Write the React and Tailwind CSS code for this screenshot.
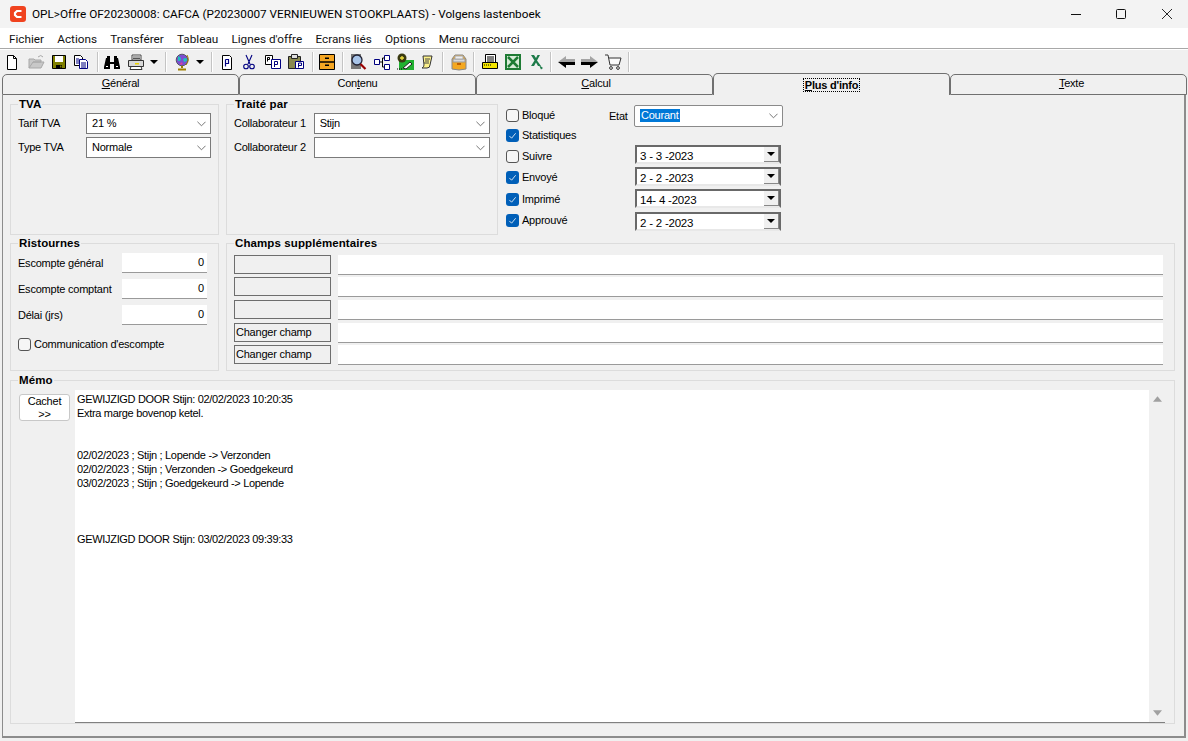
import React from "react";

const memoLines = [
  "GEWIJZIGD DOOR Stijn: 02/02/2023 10:20:35",
  "Extra marge bovenop ketel.",
  "",
  "",
  "02/02/2023 ; Stijn ; Lopende -> Verzonden",
  "02/02/2023 ; Stijn ; Verzonden -> Goedgekeurd",
  "03/02/2023 ; Stijn ; Goedgekeurd -> Lopende",
  "",
  "",
  "",
  "GEWIJZIGD DOOR Stijn: 03/02/2023 09:39:33",
];

const menus = ["Fichier", "Actions", "Transférer", "Tableau", "Lignes d'offre", "Ecrans liés", "Options", "Menu raccourci"];

function Icon({ className = "", children }) {
  return (
    <svg viewBox="0 0 18 18" className={`w-[18px] h-[18px] shrink-0 ${className}`}>
      {children}
    </svg>
  );
}

const Sep = ({ className = "" }) => <div className={`w-[2px] h-[20px] bg-[#c4c4c4] border-r border-white shrink-0 ${className}`} />;

const Drop = ({ className = "" }) => (
  <svg viewBox="0 0 12 18" className={`w-[12px] h-[18px] shrink-0 ${className}`}>
    <path d="M2 7h8l-4 4z" fill="#000" />
  </svg>
);

function Toolbar() {
  return (
    <div className="h-[23px] flex items-center bg-[#f0f0f0]">
      <Icon className="ml-[3px]"><path d="M4.500 2.500h6l3 3v11h-9z" fill="#fff" stroke="#000" /><path d="M10.500 2.500v3h3" fill="none" stroke="#000" /></Icon>
      <Icon className="ml-[7px]"><path d="M1 15V6h5l1 1h6v2H5l-4 6h12l3-6H5" fill="#c8c8c8" stroke="#a8a8a8" /><path d="M10 4q3-3 5 0" fill="none" stroke="#a8a8a8" /></Icon>
      <Icon className="ml-[4px]"><path d="M2.500 2.500h13v13h-13z" fill="#808000" stroke="#000" /><path d="M5 3h8v6H5z" fill="#fff" /><path d="M6 12h6v3.500H6z" fill="#000" /><path d="M10 12.500h1.500v2H10z" fill="#808000" /></Icon>
      <Icon className="ml-[4px]"><path d="M2.500 2.500h6l2 2v8h-8z" fill="#fff" stroke="#000" /><path d="M7.500 6.500h6l2 2v7h-8z" fill="#fff" stroke="#000080" /><path d="M4 6h3M4 8h3M4 10h3M9 10h5M9 12h5M9 14h5" stroke="#000080" /></Icon>
      <Sep className="ml-[7px]" />
      <Icon className="ml-[4px]"><path d="M3 5h4v4h4V5h4l2 9v2h-6V11H7v5H1v-2z" fill="#000" /><path d="M4 3h3v3H4zM11 3h3v3h-3z" fill="#000" /><path d="M3 13h2v1H3zM13 13h2v1h-2z" fill="#fff" /></Icon>
      <Icon className="ml-[6px]"><path d="M5 2h9v5H5z" fill="#fff" stroke="#444" /><path d="M1.500 7.500h15v6h-15z" fill="#d8d8d8" stroke="#333" /><path d="M4 13.500h10l1 3H3z" fill="#fff" stroke="#333" /><path d="M8 10h4v1.500H8z" fill="#e8d000" /><path d="M6 4h7M6 5.500h7" stroke="#555" /></Icon>
      <Drop className="ml-[3px]" />
      <Sep className="ml-[5px]" />
      <Icon className="ml-[6px]">
        <circle cx="9" cy="7" r="5.800" fill="#7b4fd0" stroke="#556" />
        <path d="M5 3q3 1 3 3t-3 2zM10 6q3-2 4 0t-3 3z" fill="#20c0c0" />
        <path d="M8 9l2 2-3 1z" fill="#e040a0" />
        <path d="M9 13v2M5 16.500h8" stroke="#a08000" strokeWidth="2" />
        <path d="M14 2q3 5-1 10" fill="none" stroke="#a08000" />
      </Icon>
      <Drop className="ml-[3px]" />
      <Sep className="ml-[5px]" />
      <Icon className="ml-[5px]"><path d="M4.500 2.500h7l2 2v12h-9z" fill="#fff" stroke="#000" /><path d="M7.500 6.500h3v4h-3M7.500 6.500v7" fill="none" stroke="#000080" strokeWidth="1.200" /></Icon>
      <Icon className="ml-[4px]"><path d="M6 2l4 9M12 2l-4 9" stroke="#000080" strokeWidth="1.100" /><circle cx="6" cy="13.500" r="2.300" fill="none" stroke="#000080" strokeWidth="1.100" /><circle cx="12" cy="13.500" r="2.300" fill="none" stroke="#000080" strokeWidth="1.100" /></Icon>
      <Icon className="ml-[6px]"><path d="M1.500 2.500h7v9h-7z" fill="#fff" stroke="#000" /><path d="M7.500 6.500h9v9h-9z" fill="#fff" stroke="#000080" /><path d="M10.500 8.500h3v3h-3M10.500 8.500v5.500" fill="none" stroke="#000080" /><path d="M3.500 4.500h2v2h-2M3.500 4.500v4" fill="none" stroke="#000" /></Icon>
      <Icon className="ml-[5px]"><path d="M1.500 3.500h12v12h-12z" fill="#8a8a50" stroke="#222" /><path d="M4.500 1.500h6v4h-6z" fill="#ddd" stroke="#222" /><path d="M8.500 8.500h8v7h-8z" fill="#fff" stroke="#000080" /><path d="M11.500 10h3v2.500h-3M11.500 10v4.500" fill="none" stroke="#000080" /></Icon>
      <Sep className="ml-[7px]" />
      <Icon className="ml-[4px]"><path d="M1.500 1.500h15v15h-15z" fill="#f5a623" stroke="#000" /><path d="M1.500 9h15" stroke="#000" strokeWidth="1.500" /><path d="M7 4.500h4v1.500H7zM7 11.500h4V13H7z" fill="#000" /></Icon>
      <Sep className="ml-[6px]" />
      <Icon className="ml-[5px]"><path d="M2 1h10v15H2z" fill="#777" /><circle cx="8" cy="7" r="5" fill="#a8c4e8" stroke="#223" strokeWidth="1.300" /><path d="M11.500 11l5 5" stroke="#900" strokeWidth="2.200" /></Icon>
      <Icon className="ml-[6px]"><path d="M1.500 6.500h5v5h-5zM11.500 2.500h5v5h-5zM11.500 11.500h5v5h-5z" fill="#fff" stroke="#000080" /><path d="M6.500 9h3V5h2M9.500 9v5h2" fill="none" stroke="#000" /></Icon>
      <Icon className="ml-[5px]"><path d="M3 7h15v10H3z" fill="#20b030" /><circle cx="6" cy="5" r="4.500" fill="#3a3a10" /><path d="M6 3v4M4 5h4" stroke="#f0e040" strokeWidth="1.300" /><path d="M7 15l7-6 2 2-6 5z" fill="#fff" stroke="#222" /><path d="M1 16h5" stroke="#000" strokeDasharray="1 1" /></Icon>
      <Icon className="ml-[4px]"><path d="M5 3h9l-2 9q0 3-3 3H4q2-1 2-3z" fill="#fdf28a" stroke="#333" /><path d="M7 6h5M7 8h4M6 10h5" stroke="#444" /></Icon>
      <Sep className="ml-[6px]" />
      <Icon className="ml-[6px]"><path d="M2 6l3-4h8l3 4v10q-7 2-14 0z" fill="#f4a820" stroke="#888" /><path d="M3 6h12v3H3z" fill="#d8d8d8" stroke="#999" /><path d="M5 3h8v3H5z" fill="#eee" stroke="#aaa" /><path d="M7 10h4v2H7z" fill="#c06000" /></Icon>
      <Sep className="ml-[5px]" />
      <Icon className="ml-[6px]"><path d="M4.500 1.500h10v10h-10z" fill="#fff" stroke="#000" /><path d="M6 4h7M6 6h7M6 8h7" stroke="#000" /><path d="M1.500 9.500h15v6h-15z" fill="#f5e600" stroke="#000" /><path d="M3 12h1M5 12h1M7 12h1M9 12h1" stroke="#000" /></Icon>
      <Icon className="ml-[5px]"><path d="M1 1h16v16H1z" fill="#1e7b34" /><path d="M3 3h12v12H3z" fill="#d8ecd8" /><path d="M4 4l10 10M14 4L4 14" stroke="#1e7b34" strokeWidth="2.500" /></Icon>
      <Icon className="ml-[6px]"><path d="M3 2l3.500 5.500L3 13h3l2-3.500L10 13h3L9 7.500 12 2H9.500L8 5 6 2z" fill="#1e7b4a" /><path d="M11 12l4 3-2 1.500z" fill="#1e7b4a" /></Icon>
      <Sep className="ml-[4px]" />
      <Icon className="ml-[6px]"><path d="M0 9l8-6v3h9v3z" fill="#a4a4a4" /><path d="M0 9h17v3H8v3z" fill="#000" /></Icon>
      <Icon className="ml-[4px]"><path d="M18 9l-8-6v3H1v3z" fill="#a4a4a4" /><path d="M18 9H1v3h9v3z" fill="#000" /></Icon>
      <Icon className="ml-[6px]"><path d="M1 2h3l2 10h9l2-7H5" fill="#fafafa" stroke="#333" /><circle cx="7" cy="15" r="1.400" fill="none" stroke="#333" /><circle cx="14" cy="15" r="1.400" fill="none" stroke="#333" /></Icon>
      <Sep className="ml-[6px]" />
    </div>
  );
}

function Tab({ active, first, rest, last, className = "" }) {
  return (
    <div
      className={`w-[237px] shrink-0 flex items-center justify-center border-x border-t border-[#707070] rounded-t-[5px] bg-[#f0f0f0] ${
        active ? "h-[22px] font-bold" : "h-[21px] border-b pb-[2px]"
      } ${className}`}
    >
      <span className={active ? "border border-dotted border-black px-[1px] leading-[12px]" : ""}>
        {first}
        <span className="underline">{rest}</span>
        {last}
      </span>
    </div>
  );
}

function GroupBox({ title, className = "", children }) {
  return (
    <fieldset className={`border border-[#dcdcdc] min-w-0 ${className}`}>
      <legend className="px-[1px] h-[13px] leading-[13px] text-[11.500px] tracking-[0.1px] font-bold text-black">{title}</legend>
      {children}
    </fieldset>
  );
}

function ComboBox({ value, className = "" }) {
  return (
    <div className={`h-[21px] bg-white border border-[#7a7a7a] flex items-center pl-[5px] pr-[4px] justify-between ${className}`}>
      <span>{value}</span>
      <svg viewBox="0 0 10 6" className="w-[9px] h-[6px]"><path d="M.5.5L5 5 9.500.5" fill="none" stroke="#666" /></svg>
    </div>
  );
}

function Check({ on, label, className = "" }) {
  return (
    <div className={`flex items-center gap-[3px] ${className}`}>
      <div className={`w-[13px] h-[13px] rounded-[3px] flex items-center justify-center ${on ? "bg-[#005fb8]" : "bg-[#f6f6f6] border border-[#555]"}`}>
        {on && (
          <svg viewBox="0 0 10 10" className="w-[9px] h-[9px]"><path d="M1.500 5.500L4 8l4.500-5.500" fill="none" stroke="#fff" strokeWidth=".9" /></svg>
        )}
      </div>
      <span>{label}</span>
    </div>
  );
}

function DatePicker({ value, className = "" }) {
  return (
    <div className={`w-[146px] h-[19px] flex bg-white border-2 border-t-[#696969] border-l-[#696969] border-r-[#696969] border-b-[#e8e8e8] ${className}`}>
      <span className="flex-1 pl-[3px] text-[11.500px] leading-[18px]">{value}</span>
      <div className="w-[15px] bg-[#f0f0f0] border-r border-b border-[#888] flex items-center justify-center">
        <svg viewBox="0 0 8 4" className="w-[8px] h-[4px]"><path d="M0 0h8L4 4z" fill="#000" /></svg>
      </div>
    </div>
  );
}

const NumField = ({ value }) => (
  <div className="w-[85px] h-[20px] bg-white border-b border-[#9a9a9a] text-right pr-[3px] leading-[19px]">{value}</div>
);

const ExtraRow = ({ label, className = "" }) => (
  <div className={`flex gap-[7px] ${className}`}>
    <div className="w-[97px] h-[19px] border border-[#6e6e6e] bg-[#f0f0f0] pl-[1px] leading-[17px]">{label}</div>
    <div className="w-[825px] h-[20px] bg-white border-b border-[#9a9a9a]" />
  </div>
);

export default function App() {
  return (
    <div className="w-[1188px] h-[741px] overflow-hidden bg-[#f0f0f0] text-black font-['Liberation_Sans',sans-serif] text-[11px] tracking-[-0.22px] flex flex-col">
      {/* title bar */}
      <div className="h-[28px] shrink-0 bg-[#f3f3f3] flex items-center font-['Roboto',sans-serif] text-[11.750px] tracking-normal">
        <svg viewBox="0 0 16 16" className="w-[16px] h-[16px] ml-[10px] mr-[6px]">
          <rect width="16" height="16" rx="3" fill="#f0431f" />
          <path d="M11.500 5H7L5 7v2l2 2h4.500" fill="none" stroke="#fff" strokeWidth="2.200" />
        </svg>
        <span className="pt-[1px]">OPL&gt;Offre OF20230008: CAFCA (P20230007 VERNIEUWEN STOOKPLAATS) - Volgens lastenboek</span>
        <div className="ml-auto flex items-center mr-[16px] gap-[35px]">
          <svg viewBox="0 0 10 10" className="w-[10px] h-[10px]"><path d="M0 5.500h10" stroke="#111" /></svg>
          <svg viewBox="0 0 10 10" className="w-[10px] h-[10px]"><rect x=".5" y=".5" width="9" height="9" rx="1" fill="none" stroke="#111" /></svg>
          <svg viewBox="0 0 10 10" className="w-[10px] h-[10px] ml-[1px]"><path d="M0 0l10 10M10 0L0 10" stroke="#111" strokeWidth=".9" /></svg>
        </div>
      </div>
      {/* menu */}
      <div className="h-[21px] shrink-0 bg-white border-b border-[#a8a8a8] flex items-center pl-[9px] pt-[3px] gap-[13.200px] font-['Roboto',sans-serif] text-[11.750px] tracking-normal text-[#111]">
        {menus.map((m) => (
          <span key={m}>{m}</span>
        ))}
      </div>
      <div className="h-[1px] bg-white shrink-0" />
      <Toolbar />
      {/* tabs */}
      <div className="h-[22px] shrink-0 flex items-end pl-[2px]">
        <Tab first="" rest="G" last="énéral" />
        <Tab first="Con" rest="t" last="enu" />
        <Tab first="" rest="C" last="alcul" className="pl-[3px]" />
        <Tab active first="" rest="P" last="lus d'info" />
        <Tab first="" rest="T" last="exte" className="w-[236px] pl-[6px]" />
      </div>
      {/* page */}
      <div className="h-[643px] shrink-0 mx-[2px] border-b-2 border-[#8c8c8c] pt-[3px] px-[8px] flex flex-col gap-[2px] relative">
        <div className="flex gap-[7px] h-[137px] shrink-0">
          <GroupBox title="TVA" className="w-[209px] px-[7px]">
            <div className="pt-[2px] flex flex-col gap-[3px]">
              <div className="flex items-center">
                <span className="w-[68px]">Tarif TVA</span>
                <ComboBox value="21 %" className="w-[125px]" />
              </div>
              <div className="flex items-center">
                <span className="w-[68px]">Type TVA</span>
                <ComboBox value="Normale" className="w-[125px]" />
              </div>
            </div>
          </GroupBox>
          <GroupBox title="Traité par" className="w-[272px] px-[7px]">
            <div className="pt-[2px] flex flex-col gap-[3px]">
              <div className="flex items-center">
                <span className="w-[80px]">Collaborateur 1</span>
                <ComboBox value="Stijn" className="w-[177px]" />
              </div>
              <div className="flex items-center">
                <span className="w-[80px]">Collaborateur 2</span>
                <ComboBox value="" className="w-[177px]" />
              </div>
            </div>
          </GroupBox>
          <div className="flex pl-[1px]">
            <div className="w-[103px] pt-[7px] flex flex-col">
              <Check label="Bloqué" className="h-[20px]" />
              <Check on label="Statistiques" className="h-[21px]" />
              <Check label="Suivre" className="h-[21px]" />
              <Check on label="Envoyé" className="h-[21px]" />
              <Check on label="Imprimé" className="h-[22px]" />
              <Check on label="Approuvé" className="h-[21px]" />
            </div>
            <div className="flex flex-col pt-[7px]">
              <div className="flex items-center h-[22px]">
                <span className="w-[25px]">Etat</span>
                <div className="w-[149px] h-[22px] bg-white border border-[#8a8a8a] rounded-[2px] flex items-center justify-between pl-[5px] pr-[4px] pb-[1px]">
                  <span className="bg-[#0078d7] text-white px-[1px] leading-[13px]">Courant</span>
                  <svg viewBox="0 0 10 6" className="w-[9px] h-[6px]"><path d="M.5.5L5 5 9.500.5" fill="none" stroke="#666" /></svg>
                </div>
              </div>
              <div className="ml-[26px] mt-[18px] flex flex-col">
                <DatePicker value="3 - 3 -2023" />
                <DatePicker value="2 - 2 -2023" className="mt-[3px]" />
                <DatePicker value="14- 4 -2023" className="mt-[3px]" />
                <DatePicker value="2 - 2 -2023" className="mt-[4px]" />
              </div>
            </div>
          </div>
        </div>

        <div className="flex gap-[7px] h-[134px] shrink-0">
          <GroupBox title="Ristournes" className="w-[209px] px-[7px]">
            <div className="pt-[3px] flex flex-col gap-[6px]">
              <div className="flex items-center"><span className="w-[104px]">Escompte général</span><NumField value="0" /></div>
              <div className="flex items-center"><span className="w-[104px]">Escompte comptant</span><NumField value="0" /></div>
              <div className="flex items-center"><span className="w-[104px]">Délai (jrs)</span><NumField value="0" /></div>
            </div>
            <Check label="Communication d'escompte" className="mt-[11px]" />
          </GroupBox>
          <GroupBox title="Champs supplémentaires" className="w-[949px] px-[7px]">
            <div className="pt-[5px] flex flex-col">
              <ExtraRow />
              <ExtraRow className="mt-[2px]" />
              <ExtraRow className="mt-[3px]" />
              <ExtraRow label="Changer champ" className="mt-[3px]" />
              <ExtraRow label="Changer champ" className="mt-[2px]" />
            </div>
          </GroupBox>
        </div>

        <GroupBox title="Mémo" className="w-[1165px] h-[350px] mt-[1px] shrink-0 pl-[7px]">
          <div className="flex pt-[3px]">
            <div className="w-[51px] h-[27px] ml-[1px] mt-[4px] bg-white border border-[#c8c8c8] rounded-[3px] text-center leading-[13px]">
              Cachet
              <br />
              &gt;&gt;
            </div>
            <div className="ml-[5px] w-[1090px] h-[333px] bg-white border-b border-[#808080] flex">
              <div className="flex-1 pl-[2px] pt-[2px] leading-[14px] tracking-[-0.32px]">
                {memoLines.map((line, i) => (
                  <div key={i} className="h-[14px]">{line}</div>
                ))}
              </div>
              <div className="w-[16px] bg-[#f0f0f0] flex flex-col justify-between items-center py-[6px]">
                <svg viewBox="0 0 8 5" className="w-[9px] h-[6px]"><path d="M0 5h8L4 0z" fill="#a0a0a0" /></svg>
                <svg viewBox="0 0 8 5" className="w-[9px] h-[6px]"><path d="M0 0h8L4 5z" fill="#a0a0a0" /></svg>
              </div>
            </div>
          </div>
        </GroupBox>
        {/* window frame sides */}
        <div className="absolute left-0 top-0 bottom-[-2px] w-[1px] bg-[#8c8c8c]" />
        <div className="absolute right-0 top-0 bottom-[-2px] w-[2px] bg-[#8c8c8c]" />
      </div>
    </div>
  );
}
